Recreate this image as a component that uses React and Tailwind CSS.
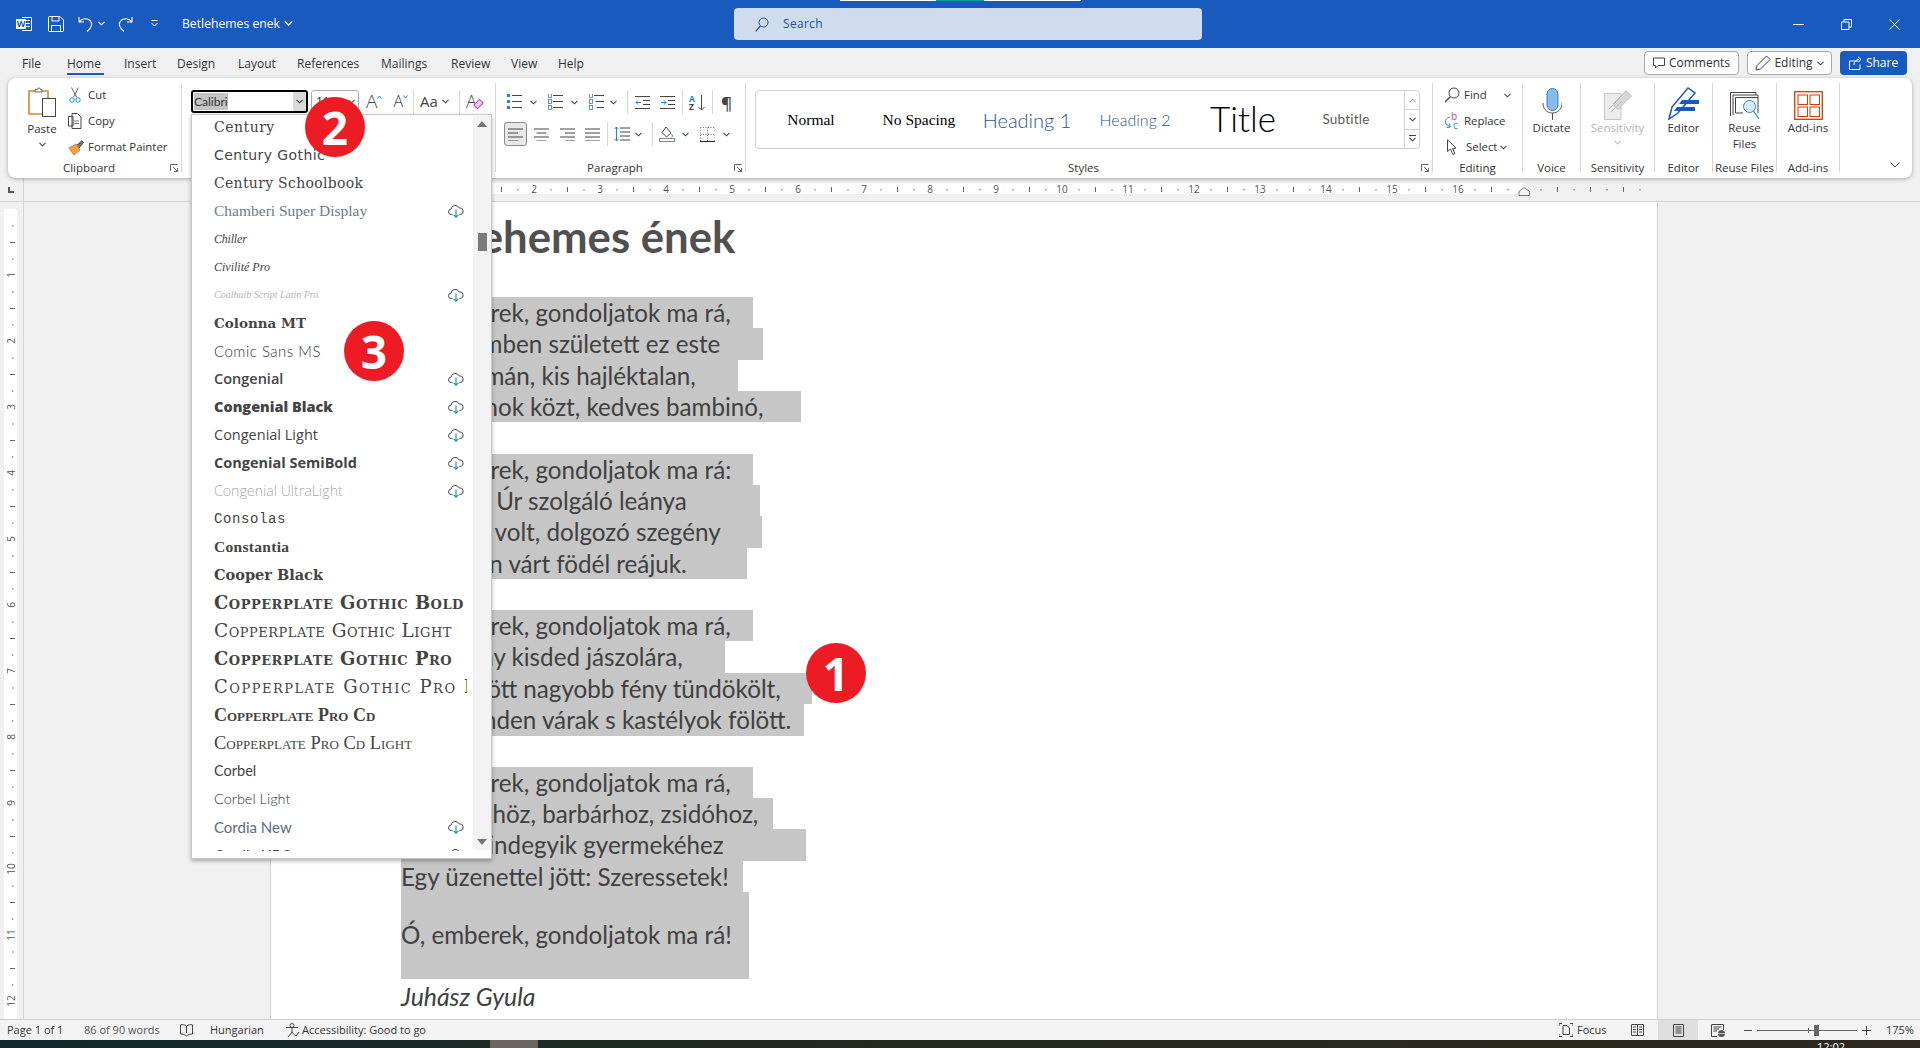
import React from "react";

const UI = "[font-family:'Open_Sans',sans-serif]";
const DOC = "[font-family:'Lato',sans-serif]";

const Svg = ({ w, h, className = "", children }) => (
  <svg width={w} height={h} viewBox={`0 0 ${w} ${h}`} fill="none" className={`shrink-0 ${className}`}>
    {children}
  </svg>
);

const Chev = ({ className = "", color = "#444" }) => (
  <Svg w={7} h={5} className={className}>
    <path d="M.5 .8 3.5 3.8 6.5 .8" stroke={color} strokeWidth="1.1" />
  </Svg>
);

const Launcher = () => (
  <Svg w={8} h={8} className="mr-[3px]">
    <path d="M.5 7V.5H7.5M3 3 7.5 7.5M7.5 4V7.5H4" stroke="#555" strokeWidth=".9" />
  </Svg>
);

const Sep = ({ className = "h-[26px]" }) => <div className={`w-px bg-[#d6d6d6] shrink-0 ${className}`} />;

const Cloud = () => (
  <Svg w={16} h={14} className="mr-[3px]">
    <path d="M4.5 10.5H3.4a2.7 2.7 0 0 1-.3-5.4 4.2 4.2 0 0 1 8-1.2 3.4 3.4 0 0 1 1.6 6.6h-1.2" stroke="#444" strokeWidth="1" />
    <path d="M8 5.5v7.5M5.7 10.8 8 13.2l2.3-2.4" stroke="#1a86d9" strokeWidth="1.1" />
  </Svg>
);

const Align = ({ rows }) => (
  <Svg w={15} h={13}>
    {rows.map(([x, w], i) => (
      <rect key={i} x={x} y={i * 4 + 0.5} width={w} height="1" fill="#444" />
    ))}
  </Svg>
);

const ListIcon = ({ kind }) => (
  <Svg w={15} h={16}>
    {[1, 7, 13].map((y, i) => (
      <g key={y}>
        {kind === "bullets" ? <rect x="0" y={y - 1} width="3" height="3" fill="#1a86d9" /> : <rect x="0.5" y={y - 1.5} width="3" height="4" fill="none" stroke="#1a86d9" strokeWidth=".8" />}
        <rect x={kind === "multi" ? 5 + i * 1.5 : 5} y={y} width={kind === "multi" ? 10 - i * 1.5 : 10} height="1" fill="#444" />
      </g>
    ))}
  </Svg>
);

const FONTS = [
  ["Century", "[font-family:'DejaVu_Serif',serif] text-[14px] tracking-[.5px] font-light", false],
  ["Century Gothic", "[font-family:'DejaVu_Sans',sans-serif] text-[14px] tracking-[.4px]", false],
  ["Century Schoolbook", "[font-family:'DejaVu_Serif',serif] text-[14px] tracking-[.3px]", false],
  ["Chamberi Super Display", "[font-family:'Liberation_Serif',serif] text-[15.5px] text-[#6f7a8c]", true],
  ["Chiller", "[font-family:'Liberation_Serif',serif] italic text-[12px] tracking-[-.2px]", false],
  ["Civilité Pro", "[font-family:'Liberation_Serif',serif] italic text-[12px]", false],
  ["Coalhuib Script Latin Pro", "[font-family:'Liberation_Serif',serif] italic text-[10px] text-[#b5b5b5]", true],
  ["Colonna MT", "[font-family:'DejaVu_Serif',serif] font-bold text-[13.5px]", false],
  ["Comic Sans MS", "[font-family:'Lato',sans-serif] text-[15px] font-light tracking-[.5px] text-[#333]", false],
  ["Congenial", "[font-family:'Open_Sans',sans-serif] font-semibold text-[14.5px]", true],
  ["Congenial Black", "[font-family:'Open_Sans',sans-serif] font-extrabold text-[14.5px]", true],
  ["Congenial Light", "[font-family:'Open_Sans',sans-serif] text-[14.5px]", true],
  ["Congenial SemiBold", "[font-family:'Open_Sans',sans-serif] font-bold text-[14.5px]", true],
  ["Congenial UltraLight", "[font-family:'Open_Sans',sans-serif] font-light text-[14.2px] text-[#aaa]", true],
  ["Consolas", "[font-family:'Liberation_Mono',monospace] text-[14px] tracking-[.6px]", false],
  ["Constantia", "[font-family:'Liberation_Serif',serif] font-bold text-[15.5px] tracking-[.3px]", false],
  ["Cooper Black", "[font-family:'DejaVu_Serif',serif] font-extrabold text-[14.5px]", false],
  ["Copperplate Gothic Bold", "[font-family:'DejaVu_Serif',serif] [font-variant:small-caps] font-bold text-[18px] tracking-[.5px]", false],
  ["Copperplate Gothic Light", "[font-family:'DejaVu_Serif',serif] [font-variant:small-caps] font-light text-[18.5px] tracking-[.5px]", false],
  ["Copperplate Gothic Pro", "[font-family:'DejaVu_Serif',serif] [font-variant:small-caps] font-bold text-[18px] tracking-[.5px]", false],
  ["Copperplate Gothic Pro Light", "[font-family:'DejaVu_Serif',serif] [font-variant:small-caps] font-light text-[18px] tracking-[1.5px]", false],
  ["Copperplate Pro Cd", "[font-family:'Liberation_Serif',serif] [font-variant:small-caps] font-bold text-[18px]", false],
  ["Copperplate Pro Cd Light", "[font-family:'Liberation_Serif',serif] [font-variant:small-caps] text-[18.5px]", false],
  ["Corbel", "[font-family:'Lato',sans-serif] text-[14.5px]", false],
  ["Corbel Light", "[font-family:'Lato',sans-serif] font-light text-[14.5px] text-[#333]", false],
  ["Cordia New", "[font-family:'Lato',sans-serif] text-[15px] text-[#5f6b7c]", true],
  ["Cordia UPC", "[font-family:'Lato',sans-serif] text-[15px]", true],
];

const STANZAS = [
  [
    ["Ó, emberek, gondoljatok ma rá,", "w-[352px]"],
    ["Betlehemben született ez este", "w-[362px]"],
    ["Egy szalmán, kis hajléktalan,", "w-[337px]"],
    ["Két barmok közt, kedves bambinó,", "w-[400px]"],
  ],
  [
    ["Ó, emberek, gondoljatok ma rá:", "w-[352px]"],
    ["Anyja az Úr szolgáló leánya", "w-[359px]"],
    ["Apja ács volt, dolgozó szegény", "w-[361px]"],
    ["Istállóban várt födél reájuk.", "w-[346px]"],
  ],
  [
    ["Ó, emberek, gondoljatok ma rá,", "w-[352px]"],
    ["E szegény kisded jászolára,", "w-[324px]"],
    ["Mely fölött nagyobb fény tündökölt,", "w-[411px]"],
    ["Mint minden várak s kastélyok fölött.", "w-[403px]"],
  ],
];

const LAST = [
  ["Ó, emberek, gondoljatok ma rá,", "w-[352px]"],
  ["Görögökhöz, barbárhoz, zsidóhoz,", "w-[372px]"],
  ["E föld mindegyik gyermekéhez", "w-[405px]"],
  ["Egy üzenettel jött: Szeressetek!", "w-[342px]"],
];

const Line = ({ text, w }) => (
  <div className={`${w} h-[31.35px] leading-[31.35px] bg-[#c6c6c6] whitespace-nowrap`}>{text}</div>
);

const Group = ({ w, label, launcher, labelClass = "", children }) => (
  <div className={`${w} h-[89px] flex flex-col border-r border-[#d6d6d6] shrink-0`}>
    <div className="flex-1 min-h-0 flex">{children}</div>
    <div className="h-[14px] -mb-[3px] flex items-center">
      <div className={`flex-1 text-center text-[11.5px] leading-[14px] text-[#333] whitespace-nowrap ${labelClass}`}>{label}</div>
      {launcher && <Launcher />}
    </div>
  </div>
);

const BigButton = ({ icon, children, className = "text-[#333]" }) => (
  <div className={`flex-1 flex flex-col items-center text-[11.5px] leading-[16px] ${className}`}>
    <div className="h-[37px] flex items-end">{icon}</div>
    <div className="text-center">{children}</div>
  </div>
);

const Badge = ({ n, className }) => (
  <div className={`absolute z-30 w-[60px] h-[60px] rounded-full bg-[#ed1c24] text-white text-[46px] font-bold leading-[60px] text-center ${UI} ${className}`}>{n}</div>
);

const TABS = [
  ["File", "w-[45px]"],
  ["Home", "w-[57px]"],
  ["Insert", "w-[53px]"],
  ["Design", "w-[61px]"],
  ["Layout", "w-[59px]"],
  ["References", "w-[84px]"],
  ["Mailings", "w-[70px]"],
  ["Review", "w-[60px]"],
  ["View", "w-[47px]"],
  ["Help", "w-[40px]"],
];

const RulerH = () => {
  const ticks = [];
  for (let i = -12; i <= 75; i++) {
    const x = 401 - 23 + i * 16.5;
    if (i % 4 === 0) continue;
    ticks.push(
      i % 2 === 0 ? <rect key={i} x={x} y="9" width="1" height="5" fill="#666" /> : <rect key={i} x={x} y="11" width="1" height="1.5" fill="#666" />
    );
  }
  return (
    <Svg w={1897} h={22}>
      <rect x="378" y="5" width="1122" height="11" fill="#fff" />
      {ticks}
      {Array.from({ length: 16 }, (_, i) => i + 1).map((n) => (
        <text key={n} x={378 + n * 66} y="15" fontSize="10" textAnchor="middle" fill="#555" fontFamily="Open Sans">
          {n}
        </text>
      ))}
      <rect x={378 + 18 * 66} y="9" width="1" height="5" fill="#666" />
      <path d="M1495 13.5 1500 9.5 1505.5 13.5V17.5H1495Z" fill="#f4f4f4" stroke="#777" />
    </Svg>
  );
};

const RulerV = () => {
  const ticks = [];
  for (let i = 1; i < 49; i++) {
    const y = 7 + i * 16.5;
    if (i % 4 === 0) continue;
    ticks.push(
      i % 2 === 0 ? <rect key={i} x="10" y={y} width="5" height="1" fill="#666" /> : <rect key={i} x="12" y={y} width="1.5" height="1" fill="#666" />
    );
  }
  return (
    <Svg w={23} h={817}>
      <rect x="4" y="7" width="13" height="810" fill="#fff" />
      {ticks}
      {Array.from({ length: 12 }, (_, i) => i + 1).map((n) => (
        <text key={n} x="0" y="0" fontSize="10" textAnchor="middle" fill="#555" fontFamily="Open Sans" transform={`translate(15 ${7 + n * 66}) rotate(-90)`}>
          {n}
        </text>
      ))}
    </Svg>
  );
};

const TitleBar = () => (
  <div className="relative h-[48px] bg-[#185abd] flex items-center text-white shrink-0">
    <div className="absolute top-0 left-[840px] w-[241px] h-px bg-white" />
    <div className="absolute top-0 left-[936px] w-[48px] h-px bg-[#00a0a0]" />
    <div className="w-[734px] flex items-center">
      <Svg w={16} h={14} className="ml-[16px]">
        <path d="M6 .5H15.5V13.5H6" stroke="#fff" />
        <path d="M8 3.5H14M8 6.5H14M8 9.5H14" stroke="#fff" />
        <rect x="0" y="2" width="10" height="10" fill="#fff" />
        <text x="5" y="10" fontSize="9" fontWeight="700" textAnchor="middle" fill="#185abd" fontFamily="Open Sans">W</text>
      </Svg>
      <Svg w={16} h={16} className="ml-[16px]">
        <path d="M.5 1.5a1 1 0 0 1 1-1H12l3.5 3.5v10.5a1 1 0 0 1-1 1H1.5a1 1 0 0 1-1-1Z" stroke="#fff" />
        <path d="M4 .5V5H11V.5M3.5 15.5V9.5H12.5V15.5" stroke="#fff" />
      </Svg>
      <Svg w={15} h={16} className="ml-[14px]">
        <path d="M1 1V6H6M1 6C4 2 9.5 2 12 4.5c3 3 2 7-3 11" stroke="#fff" strokeWidth="1.1" />
      </Svg>
      <Chev color="#fff" className="ml-[5px]" />
      <Svg w={15} h={16} className="ml-[13px]">
        <path d="M14 1V6H9M14 6C11 2 5.500 2 3 4.500c-3 3-2 7 3 11" stroke="#fff" strokeWidth="1.1" />
      </Svg>
      <Svg w={7} h={8} className="ml-[18px]">
        <path d="M.5 .5H6.500M.5 3 3.500 6 6.500 3" stroke="#fff" />
      </Svg>
      <div className={`ml-[24px] text-[12.2px] ${UI}`}>Betlehemes enek</div>
      <Chev color="#fff" className="ml-[5px] scale-125" />
    </div>
    <div className="w-[468px] h-[32px] bg-[#cfdcee] rounded-[4px] flex items-center">
      <Svg w={14} h={15} className="ml-[21px]">
        <circle cx="8.500" cy="5.500" r="4.500" stroke="#1b4f9c" />
        <path d="M5.300 9 .7 14.300" stroke="#1b4f9c" strokeWidth="1.2" />
      </Svg>
      <div className={`ml-[14px] text-[12px] tracking-[.3px] text-[#1b4f9c] ${UI}`}>Search</div>
    </div>
    <div className="flex-1 flex items-center justify-end pr-[20px]">
      <div className="w-[11px] h-px bg-white" />
      <Svg w={11} h={11} className="ml-[37px]">
        <path d="M.5 3H8V10.500H.5ZM3 3V.5H10.500V8H8" stroke="#fff" />
      </Svg>
      <Svg w={11} h={11} className="ml-[37px]">
        <path d="M.5 .5 10.500 10.500M10.500 .5 .5 10.500" stroke="#fff" />
      </Svg>
    </div>
  </div>
);

const MenuBar = () => (
  <div className="h-[30px] flex items-center pl-[22px] text-[12px] text-[#333] shrink-0">
    {TABS.map(([t, w]) => (
      <div key={t} className={`${w} shrink-0 h-[30px] leading-[31px] relative`}>
        {t}
        {t === "Home" && <div className="absolute left-0 top-[25px] w-[37px] h-[2px] bg-[#185abd]" />}
      </div>
    ))}
    <div className="flex-1 flex justify-end pr-[13px] gap-[8px] items-center">
      <div className="w-[95px] h-[24px] bg-[#fbfbfb] border border-[#ababab] rounded-[4px] flex items-center justify-center gap-[4px]">
        <Svg w={12} h={12}>
          <path d="M.5 1H11.500V8.500H5L2.500 11V8.500H.5Z" stroke="#444" />
        </Svg>
        Comments
      </div>
      <div className="w-[85px] h-[24px] bg-[#fbfbfb] border border-[#ababab] rounded-[4px] flex items-center justify-center gap-[3px]">
        <Svg w={16} h={16}>
          <path d="M1 15 2 10.500 11.500 1l3.500 3.500L5.500 14Z" stroke="#444" />
        </Svg>
        Editing
        <Chev className="ml-[1px]" />
      </div>
      <div className="w-[67px] h-[24px] bg-[#185abd] text-white rounded-[4px] flex items-center justify-center gap-[4px]">
        <Svg w={13} h={14}>
          <path d="M9 5H.5V13.500H11V8.500M5 9C5 5.500 7 3.500 10 3.500M9 .8 12 3.500 9 6.200" stroke="#fff" />
        </Svg>
        Share
      </div>
    </div>
  </div>
);

const Ribbon = () => (
  <div className="relative z-10 ml-[8px] w-[1904px] h-[100px] bg-white rounded-[8px] shadow-[0_1px_4px_rgba(0,0,0,0.3)] flex py-[5px] text-[#333] shrink-0">
    <Group w="w-[174px]" label="Clipboard" launcher>
      <div className="ml-[12px] w-[44px] flex flex-col items-center text-[11.5px] leading-[16px]">
        <Svg w={28} h={30} className="mt-[4px]">
          <path d="M1 4H20V27H1Z" fill="#fff" stroke="#d9822b" strokeWidth="1.6" />
          <path d="M7 5V2.500H9.500a1.500 1.500 0 0 1 3 0H14V5Z" fill="#fff" stroke="#666" />
          <rect x="14.500" y="11.500" width="13" height="18" fill="#fff" stroke="#444" />
        </Svg>
        <div className="mt-[4px]">Paste</div>
        <Chev className="mt-[5px]" />
      </div>
      <div className="ml-[4px] -mt-px flex flex-col text-[11.4px]">
        <div className="h-[26px] flex items-center gap-[6px]">
          <Svg w={14} h={16}>
            <path d="M3.500 .5 8.500 10M10.500 .5 5.500 10" stroke="#666" />
            <circle cx="4" cy="13" r="2.200" stroke="#1a86d9" />
            <circle cx="10" cy="13" r="2.200" stroke="#1a86d9" />
          </Svg>
          Cut
        </div>
        <div className="h-[26px] flex items-center gap-[6px]">
          <Svg w={14} h={16}>
            <path d="M.5 3.500H5V13H.5ZM4 .5H9.500L13 4V15.500H4Z" fill="#fff" stroke="#444" />
            <path d="M6 8H11M6 10.500H11" stroke="#777" />
          </Svg>
          Copy
        </div>
        <div className="h-[26px] flex items-center gap-[4px]">
          <Svg w={16} h={15}>
            <path d="M1 8 8 4 12 10 6 15Z" fill="#f0a24a" stroke="#d9822b" />
            <path d="M9 5 14 .8 15.500 2.500 11 8" fill="#777" stroke="#444" />
          </Svg>
          Format Painter
        </div>
      </div>
    </Group>

    <Group w="w-[314px]" label="Font">
      <div className="ml-[9px] mt-[7px] w-[117px] h-[23px] border-2 border-black rounded-[3px] flex items-center text-[12px] overflow-hidden">
        <span className="ml-[1px] bg-[#c4c4c4] leading-[17px] text-[#333] [font-family:'Lato',sans-serif]">Calibri</span>
        <div className="ml-auto w-[13px] h-full bg-[#d9d9d9] flex items-center justify-center">
          <Chev />
        </div>
      </div>
      <div className="ml-[3px] mt-[7px] w-[48px] h-[23px] border border-[#ababab] rounded-[3px] flex items-center text-[12px] pl-[4px]">
        11
        <Chev className="ml-auto mr-[3px]" />
      </div>
      <div className="mt-[7px] h-[23px] flex items-center text-[#444]">
        <span className="ml-[7px] text-[19px] font-light leading-[23px]">A</span>
        <Svg w={5} h={4} className="-mt-[10px]">
          <path d="M.5 3.500 2.500 1 4.500 3.500" stroke="#1a86d9" />
        </Svg>
        <span className="ml-[11px] text-[16px] font-light leading-[23px]">A</span>
        <Svg w={5} h={4} className="-mt-[10px]">
          <path d="M.5 .5 2.500 3 4.500 .5" stroke="#1a86d9" />
        </Svg>
        <Sep className="h-[24px] ml-[5px]" />
        <span className="ml-[6px] w-[18px] text-[15px] leading-[23px] whitespace-nowrap">Aa</span>
        <Chev className="ml-[4px]" />
        <Sep className="h-[24px] ml-[10px]" />
        <span className="ml-[6px] text-[18px] font-light leading-[23px] relative">
          A
          <span className="absolute left-[8px] top-[11px] w-[9px] h-[6px] border border-[#b146c2] rotate-[-45deg] bg-[#eccdf2]" />
        </span>
      </div>
    </Group>

    <Group w="w-[250px]" label="Paragraph" launcher>
      <div className="flex flex-col pt-[3px]">
        <div className="h-[32px] flex items-center">
          <div className="ml-[11px]"><ListIcon kind="bullets" /></div>
          <Chev className="ml-[8px]" />
          <div className="ml-[11px]"><ListIcon kind="numbers" /></div>
          <Chev className="ml-[8px]" />
          <div className="ml-[11px]"><ListIcon kind="multi" /></div>
          <Chev className="ml-[6px]" />
          <Sep className="ml-[10px] h-[24px]" />
          <Svg w={15} h={13} className="ml-[7px]">
            <path d="M0 .5H15M8 4.500H15M8 8.500H15M0 12.500H15" stroke="#444" />
            <path d="M6 6.500H1M3 4.500 1 6.500 3 8.500" stroke="#1a86d9" />
          </Svg>
          <Svg w={15} h={13} className="ml-[10px]">
            <path d="M0 .5H15M8 4.500H15M8 8.500H15M0 12.500H15" stroke="#444" />
            <path d="M1 6.500H6M4 4.500 6 6.500 4 8.500" stroke="#1a86d9" />
          </Svg>
          <Sep className="ml-[7px] h-[24px]" />
          <Svg w={17} h={17} className="ml-[6px]">
            <text x="0" y="7.500" fontSize="8.500" fontWeight="700" fill="#1a86d9" fontFamily="Open Sans">A</text>
            <text x="0" y="16" fontSize="8.500" fontWeight="700" fill="#444" fontFamily="Open Sans">Z</text>
            <path d="M12.500 1V16M9.500 13 12.500 16 15.500 13" stroke="#444" />
          </Svg>
          <Sep className="ml-[6px] h-[24px]" />
          <span className="ml-[8px] text-[17px] font-semibold leading-none text-[#444]">¶</span>
        </div>
        <div className="h-[32px] flex items-center">
          <div className="ml-[8px] w-[23px] h-[24px] bg-[#e8e8e8] border border-[#8a8a8a] rounded-[3px] flex items-center justify-center">
            <Align rows={[[0, 15], [0, 10], [0, 15], [0, 10]]} />
          </div>
          <div className="ml-[7px]"><Align rows={[[0, 15], [2.500, 10], [0, 15], [2.500, 10]]} /></div>
          <div className="ml-[11px]"><Align rows={[[0, 15], [5, 10], [0, 15], [5, 10]]} /></div>
          <div className="ml-[10px]"><Align rows={[[0, 15], [0, 15], [0, 15], [0, 15]]} /></div>
          <Sep className="ml-[7px] h-[24px]" />
          <Svg w={16} h={16} className="ml-[6px]">
            <path d="M6 2H16M6 6H16M6 10H16M6 14H16" stroke="#444" />
            <path d="M2.500 1V15M.5 3 2.500 1 4.500 3M.5 13 2.500 15 4.500 13" stroke="#1a86d9" />
          </Svg>
          <Chev className="ml-[5px]" />
          <Sep className="ml-[10px] h-[24px]" />
          <Svg w={16} h={16} className="ml-[6px]">
            <path d="M7 1 3 6.500 7.500 11 12 7Z" stroke="#444" />
            <path d="M12.500 8c1 1.500 1.500 2.500 0 3.500" stroke="#1a86d9" />
            <rect x=".5" y="12.500" width="15" height="3" stroke="#888" />
          </Svg>
          <Chev className="ml-[7px]" />
          <Svg w={15} h={15} className="ml-[11px]">
            <path d="M.5 .5H15M.5 .5V14M7.500 .5V14M15 .5V14M.5 7.500H15" stroke="#777" strokeDasharray="1 1.500" />
            <path d="M0 14.500H15" stroke="#222" />
          </Svg>
          <Chev className="ml-[8px]" />
        </div>
      </div>
    </Group>

    <Group w="w-[687px]" label="Styles" launcher>
      <div className="ml-[9px] mt-[7px] w-[665px] h-[59px] border border-[#d0d0d0] rounded-[4px] flex">
        <div className="ml-[1px] w-[108px] flex items-center justify-center text-[15.5px] text-black [font-family:'Liberation_Serif',serif]">Normal</div>
        <div className="w-[108px] flex items-center justify-center text-[15.5px] text-black [font-family:'Liberation_Serif',serif]">No Spacing</div>
        <div className={`w-[108px] flex items-center justify-center text-[20px] text-[#2f5496] ${DOC} font-light`}>Heading 1</div>
        <div className={`w-[108px] flex items-center justify-center text-[16px] text-[#2f5496] ${DOC} font-light`}>Heading 2</div>
        <div className={`w-[108px] -mt-[3px] flex items-center justify-center text-[35px] text-black ${DOC} font-light`}>Title</div>
        <div className={`w-[98px] flex items-center justify-center text-[13.5px] text-[#5a5a5a] tracking-[.2px] ${DOC}`}>Subtitle</div>
        <div className="ml-auto w-[15px] flex flex-col border-l border-[#d0d0d0]">
          <div className="flex-1 flex items-center justify-center border-b border-[#d0d0d0]"><Chev color="#aaa" className="rotate-180" /></div>
          <div className="flex-1 flex items-center justify-center border-b border-[#d0d0d0]"><Chev /></div>
          <div className="flex-1 flex flex-col items-center justify-center">
            <div className="w-[7px] h-px bg-[#444] mb-[1px]" />
            <Chev />
          </div>
        </div>
      </div>
    </Group>

    <Group w="w-[90px]" label="Editing">
      <div className="ml-[11px] -mt-px flex flex-col text-[11.4px] w-full">
        <div className="h-[26px] flex items-center gap-[4px]">
          <Svg w={16} h={16}>
            <circle cx="10" cy="6" r="5" stroke="#444" />
            <path d="M6.500 9.500 1 15" stroke="#444" strokeWidth="1.200" />
          </Svg>
          Find
          <Chev className="ml-[13px]" />
        </div>
        <div className="h-[26px] flex items-center gap-[4px]">
          <Svg w={16} h={18}>
            <text x="7" y="8" fontSize="10" fill="#b146c2" fontFamily="Open Sans">b</text>
            <text x="9" y="17" fontSize="10" fill="#1a86d9" fontFamily="Open Sans">c</text>
            <path d="M6 5C2 6 .5 9 2 12l4 3M2.500 15.500 6 15 5.500 11.500" stroke="#1a86d9" />
          </Svg>
          Replace
        </div>
        <div className="h-[26px] flex items-center gap-[4px]">
          <Svg w={16} h={16} className="ml-[2px]">
            <path d="M1.500 .8V12.500L4.500 10 7 15.500 9 14.500 6.500 9.500 10 9Z" stroke="#444" />
          </Svg>
          Select
          <Chev className="-ml-[1px]" />
        </div>
      </div>
    </Group>

    <Group w="w-[58px]" label="Voice">
      <BigButton
        icon={
          <Svg w={20} h={32}>
            <rect x="5" y=".5" width="11" height="22" rx="5.500" fill="#8abce8" stroke="#2b7cd3" />
            <path d="M1 15C1 21 5 25 10.500 25S20 21 20 15M10.500 25V32" stroke="#555" />
          </Svg>
        }
      >
        Dictate
      </BigButton>
    </Group>

    <Group w="w-[74px]" label="Sensitivity">
      <BigButton
        className="text-[#b4b4b4]"
        icon={
          <Svg w={28} h={30}>
            <path d="M.5 3.500H17V29.500H.5Z" fill="#ececec" stroke="#c4c4c4" />
            <path d="M9 14 22 .8 27.500 6 14 19.500Z" fill="#d8d8d8" stroke="#bbb" />
            <path d="M5 19 16 8M7 22 18 11" stroke="#bbb" />
          </Svg>
        }
      >
        <div>Sensitivity</div>
        <Chev color="#bbb" className="mx-auto mt-[4px]" />
      </BigButton>
    </Group>

    <Group w="w-[58px]" label="Editor">
      <BigButton
        icon={
          <Svg w={32} h={33}>
            <path d="M1 32 4 20 20 1 27 6 10 26Z" fill="#fff" stroke="#185abd" strokeWidth="1.500" />
            <path d="M14 13H31V17H11ZM9 20H27V24H6Z" fill="#185abd" />
          </Svg>
        }
      >
        Editor
      </BigButton>
    </Group>

    <Group w="w-[64px]" label="Reuse Files">
      <BigButton
        icon={
          <Svg w={30} h={28}>
            <path d="M.5 .5H26V3M.5 .5V24M3 3H28V5.500M3 3V23" stroke="#444" />
            <path d="M5.500 5.500H28V21M5.500 5.500V21H13" stroke="#444" />
            <circle cx="19.500" cy="14.500" r="6" fill="#d8ecfa" stroke="#2b88d8" />
            <path d="M23.500 19 29 27" stroke="#2b88d8" strokeWidth="1.300" />
          </Svg>
        }
      >
        <div>Reuse</div>
        <div>Files</div>
      </BigButton>
    </Group>

    <Group w="w-[63px]" label="Add-ins">
      <BigButton
        icon={
          <Svg w={29} h={29}>
            <rect x=".7" y=".7" width="27.600" height="27.600" stroke="#d83b01" strokeWidth="1.300" />
            <rect x="4" y="4" width="9.500" height="9.500" stroke="#d83b01" />
            <rect x="16" y="4" width="9.500" height="9.500" stroke="#d83b01" />
            <rect x="4" y="16" width="9.500" height="9.500" stroke="#d83b01" />
            <rect x="16" y="16" width="9.500" height="9.500" stroke="#d83b01" />
          </Svg>
        }
      >
        Add-ins
      </BigButton>
    </Group>

    <div className="flex-1 flex items-end justify-end pr-[12px] pb-[5px]">
      <Svg w={10} h={6}>
        <path d="M.5 .5 5 5 9.500 .5" stroke="#444" />
      </Svg>
    </div>
  </div>
);

const FontDropdown = () => (
  <div className={`absolute z-20 left-[191px] top-[114px] w-[301px] h-[745px] bg-white border border-[#c8c8c8] shadow-[0_2px_4px_rgba(0,0,0,0.3)] flex text-[#444] ${UI}`}>
    <div className="w-[281px] h-[736px] overflow-hidden">
      <div className="-mt-[2px]">
        {FONTS.map(([name, cls, cloud]) => (
          <div key={name} className="h-[28px] pl-[22px] flex items-center">
            <div className="w-[253px] flex items-center justify-between">
              <span className={`overflow-hidden whitespace-nowrap leading-[28px] ${cls}`}>{name}</span>
              {cloud && <Cloud />}
            </div>
          </div>
        ))}
      </div>
    </div>
    <div className="w-[18px] h-[734px] mt-px bg-[#f3f3f3] flex flex-col items-center pt-[5px]">
      <div className="w-0 h-0 border-x-[5px] border-x-transparent border-b-[6px] border-b-[#767676]" />
      <div className="mt-[106px] w-[9px] h-[18px] bg-[#7a7a7a]" />
      <div className="mt-auto mb-[5px] w-0 h-0 border-x-[5px] border-x-transparent border-t-[6px] border-t-[#767676]" />
    </div>
  </div>
);

const Page = () => (
  <div className={`w-[1388px] shrink-0 bg-white border-x border-[#cfcfcf] pl-[130px] text-[#404040] ${DOC} text-[24.2px] overflow-hidden`}>
    <div className="mt-[4px] h-[60px] mb-[31px] leading-[60px] text-[43.7px] font-bold text-[#505050] whitespace-nowrap">Betlehemes ének</div>
    {STANZAS.map((s, i) => (
      <div key={i} className="mb-[31.2px]">
        {s.map(([t, w]) => (
          <Line key={t} text={t} w={w} />
        ))}
      </div>
    ))}
    {LAST.map(([t, w]) => (
      <Line key={t} text={t} w={w} />
    ))}
    <div className="w-[348px] h-[87px] bg-[#c6c6c6] flex items-center whitespace-nowrap">Ó, emberek, gondoljatok ma rá!</div>
    <div className="mt-[2px] h-[31px] leading-[31px] italic text-[24.8px]">Juhász Gyula</div>
  </div>
);

const StatusBar = () => (
  <div className={`h-[21px] bg-[#f3f3f3] border-t border-[#cfcfcf] flex items-center text-[11px] text-[#333] shrink-0 ${UI}`}>
    <div className="ml-[7px] w-[77px]">Page 1 of 1</div>
    <div className="w-[96px] text-[#555]">86 of 90 words</div>
    <Svg w={13} h={13}>
      <path d="M6.500 2C5 .8 2.500 .5.5 .8V10C2.500 10 5 10.500 6.500 12 8 10.500 10.500 10 12.500 10V.8C10.500 .5 8 .8 6.500 2ZM6.500 2V9" stroke="#444" />
    </Svg>
    <div className="ml-[17px] w-[75px]">Hungarian</div>
    <Svg w={15} h={15}>
      <circle cx="7" cy="2.500" r="2" stroke="#444" />
      <path d="M1 4.500 13 4.500M7 4.500V9L3 14M7 9 9 11.500 11 13 14 9" stroke="#444" />
    </Svg>
    <div className="ml-[2px]">Accessibility: Good to go</div>
    <div className="flex-1 flex items-center justify-end h-full">
      <Svg w={14} h={14}>
        <path d="M0 3V.5H3M11 .5H14V3M14 11V13.500H11M3 13.500H0V11" stroke="#444" />
        <path d="M4 2.500H8L10.500 5V11.500H4Z" stroke="#444" />
      </Svg>
      <div className="ml-[4px] w-[54px]">Focus</div>
      <Svg w={13} h={12}>
        <path d="M.5 .5H6.500V11.500H.5ZM6.500 .5H12.500V11.500H6.500ZM2 3H5M2 5.500H5M2 8H5M8 3H11M8 5.500H11M8 8H11" stroke="#444" />
      </Svg>
      <div className="ml-[14px] w-[40px] h-full bg-[#dedede] flex items-center justify-center">
        <Svg w={11} h={13}>
          <path d="M.5 .5H10.500V12.500H.5ZM2.500 3H8.500M2.500 5H8.500M2.500 7H8.500M2.500 9H8.500" stroke="#444" />
        </Svg>
      </div>
      <Svg w={14} h={13} className="ml-[13px]">
        <path d="M.5 .5H12.500V6M.5 .5V12.500H6M2.500 3H10.500M2.500 5H8M2.500 7H6" stroke="#444" />
        <circle cx="10.500" cy="9.500" r="3.500" fill="#555" />
        <path d="M7 9.500H14" stroke="#f3f3f3" strokeWidth=".7" />
      </Svg>
      <div className="ml-[19px] w-[8px] h-px bg-[#444]" />
      <div className="ml-[5px] w-[100px] h-px bg-[#666] relative">
        <div className="absolute left-[51px] -top-[2px] w-px h-[5px] bg-[#666]" />
        <div className="absolute left-[57px] -top-[5px] w-[5px] h-[11px] bg-[#666]" />
      </div>
      <Svg w={9} h={9} className="ml-[5px]">
        <path d="M0 4.500H9M4.500 0V9" stroke="#444" />
      </Svg>
      <div className="ml-[15px] mr-[8px] w-[26px]">175%</div>
    </div>
  </div>
);

const App = () => (
  <div className={`relative w-[1920px] h-[1048px] overflow-hidden bg-[#f0f0f0] flex flex-col ${UI}`}>
    <TitleBar />
    <MenuBar />
    <Ribbon />

    <div className="h-[24px] flex border-b border-[#d4d4d4] shrink-0">
      <div className="w-[24px] border-r border-[#d4d4d4] shrink-0 relative">
        <div className="absolute left-[8px] top-[9px] w-[6px] h-[6px] border-l-2 border-b-2 border-[#555]" />
      </div>
      <RulerH />
    </div>

    <div className="flex-1 min-h-0 flex overflow-hidden">
      <div className="w-[24px] border-r border-[#d4d4d4] shrink-0">
        <RulerV />
      </div>
      <div className="w-[246px] shrink-0" />
      <Page />
    </div>

    <StatusBar />
    <div className="relative h-[8px] bg-gradient-to-r from-[#10292b] via-[#26291f] to-[#2a2820] overflow-hidden shrink-0 flex">
      <div className="ml-[490px] w-[48px] bg-[#6a6560]" />
      <div className="absolute left-[1817px] -top-[1px] text-[11px] leading-[16px] text-white">12:02</div>
    </div>

    <FontDropdown />
    <Badge n="2" className="left-[305px] top-[97px]" />
    <Badge n="3" className="left-[344px] top-[321px]" />
    <Badge n="1" className="left-[806px] top-[643px]" />
  </div>
);

export default App;
